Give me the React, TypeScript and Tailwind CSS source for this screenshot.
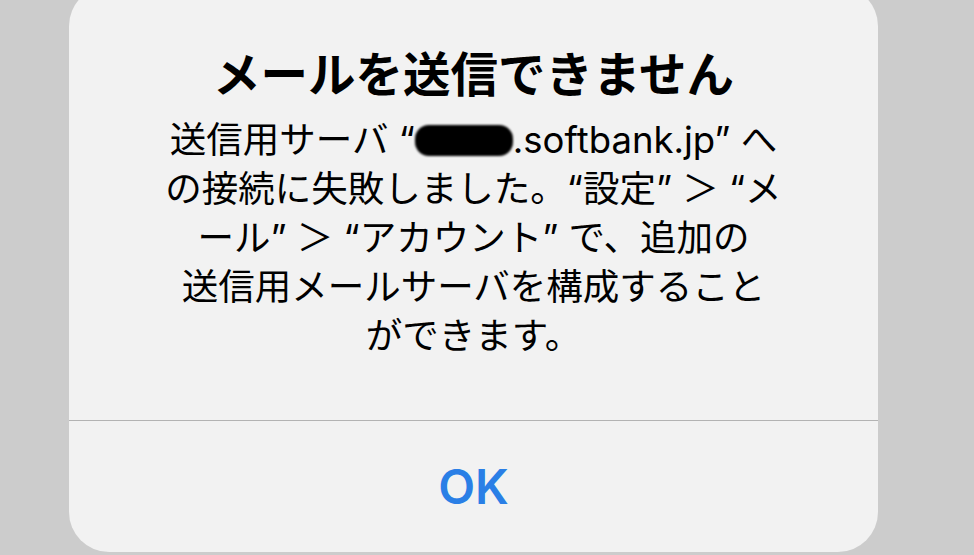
import React from "react";

export default function App() {
  const font = { fontFamily: 'Inter, "Noto Sans CJK JP", sans-serif' };
  return (
    <div
      className="w-[974px] h-[555px] bg-[#cccccc] overflow-hidden flex"
      style={font}
    >
      <div className="ml-[69px] w-[809px] h-[566px] -mt-[14px] shrink-0 rounded-[40px] bg-[#f2f2f2] flex flex-col items-center">
        <div className="pt-[61px] h-[56px] box-content text-[47.5px] leading-[56px] font-bold text-black whitespace-nowrap">
          メールを送信できません
        </div>
        <div className="mt-[13px] text-[36.5px] leading-[49px] text-black text-center whitespace-nowrap">
          <div className="flex items-center justify-center">
            <span>送信用サーバ “</span>
            <span className="inline-block w-[98px] h-[31px] bg-black rounded-[14px] blur-[1px]" />
            <span>.softbank.jp” へ</span>
          </div>
          <div>の接続に失敗しました。“設定” ＞ “メ</div>
          <div>ール” ＞ “アカウント” で、追加の</div>
          <div>送信用メールサーバを構成すること</div>
          <div>ができます。</div>
        </div>
        <div className="mt-auto w-full border-t border-[#b3b3b3] h-[132px] flex items-center justify-center">
          <span className="text-[48px] font-semibold text-[#2a7fe6] leading-none">OK</span>
        </div>
      </div>
    </div>
  );
}
